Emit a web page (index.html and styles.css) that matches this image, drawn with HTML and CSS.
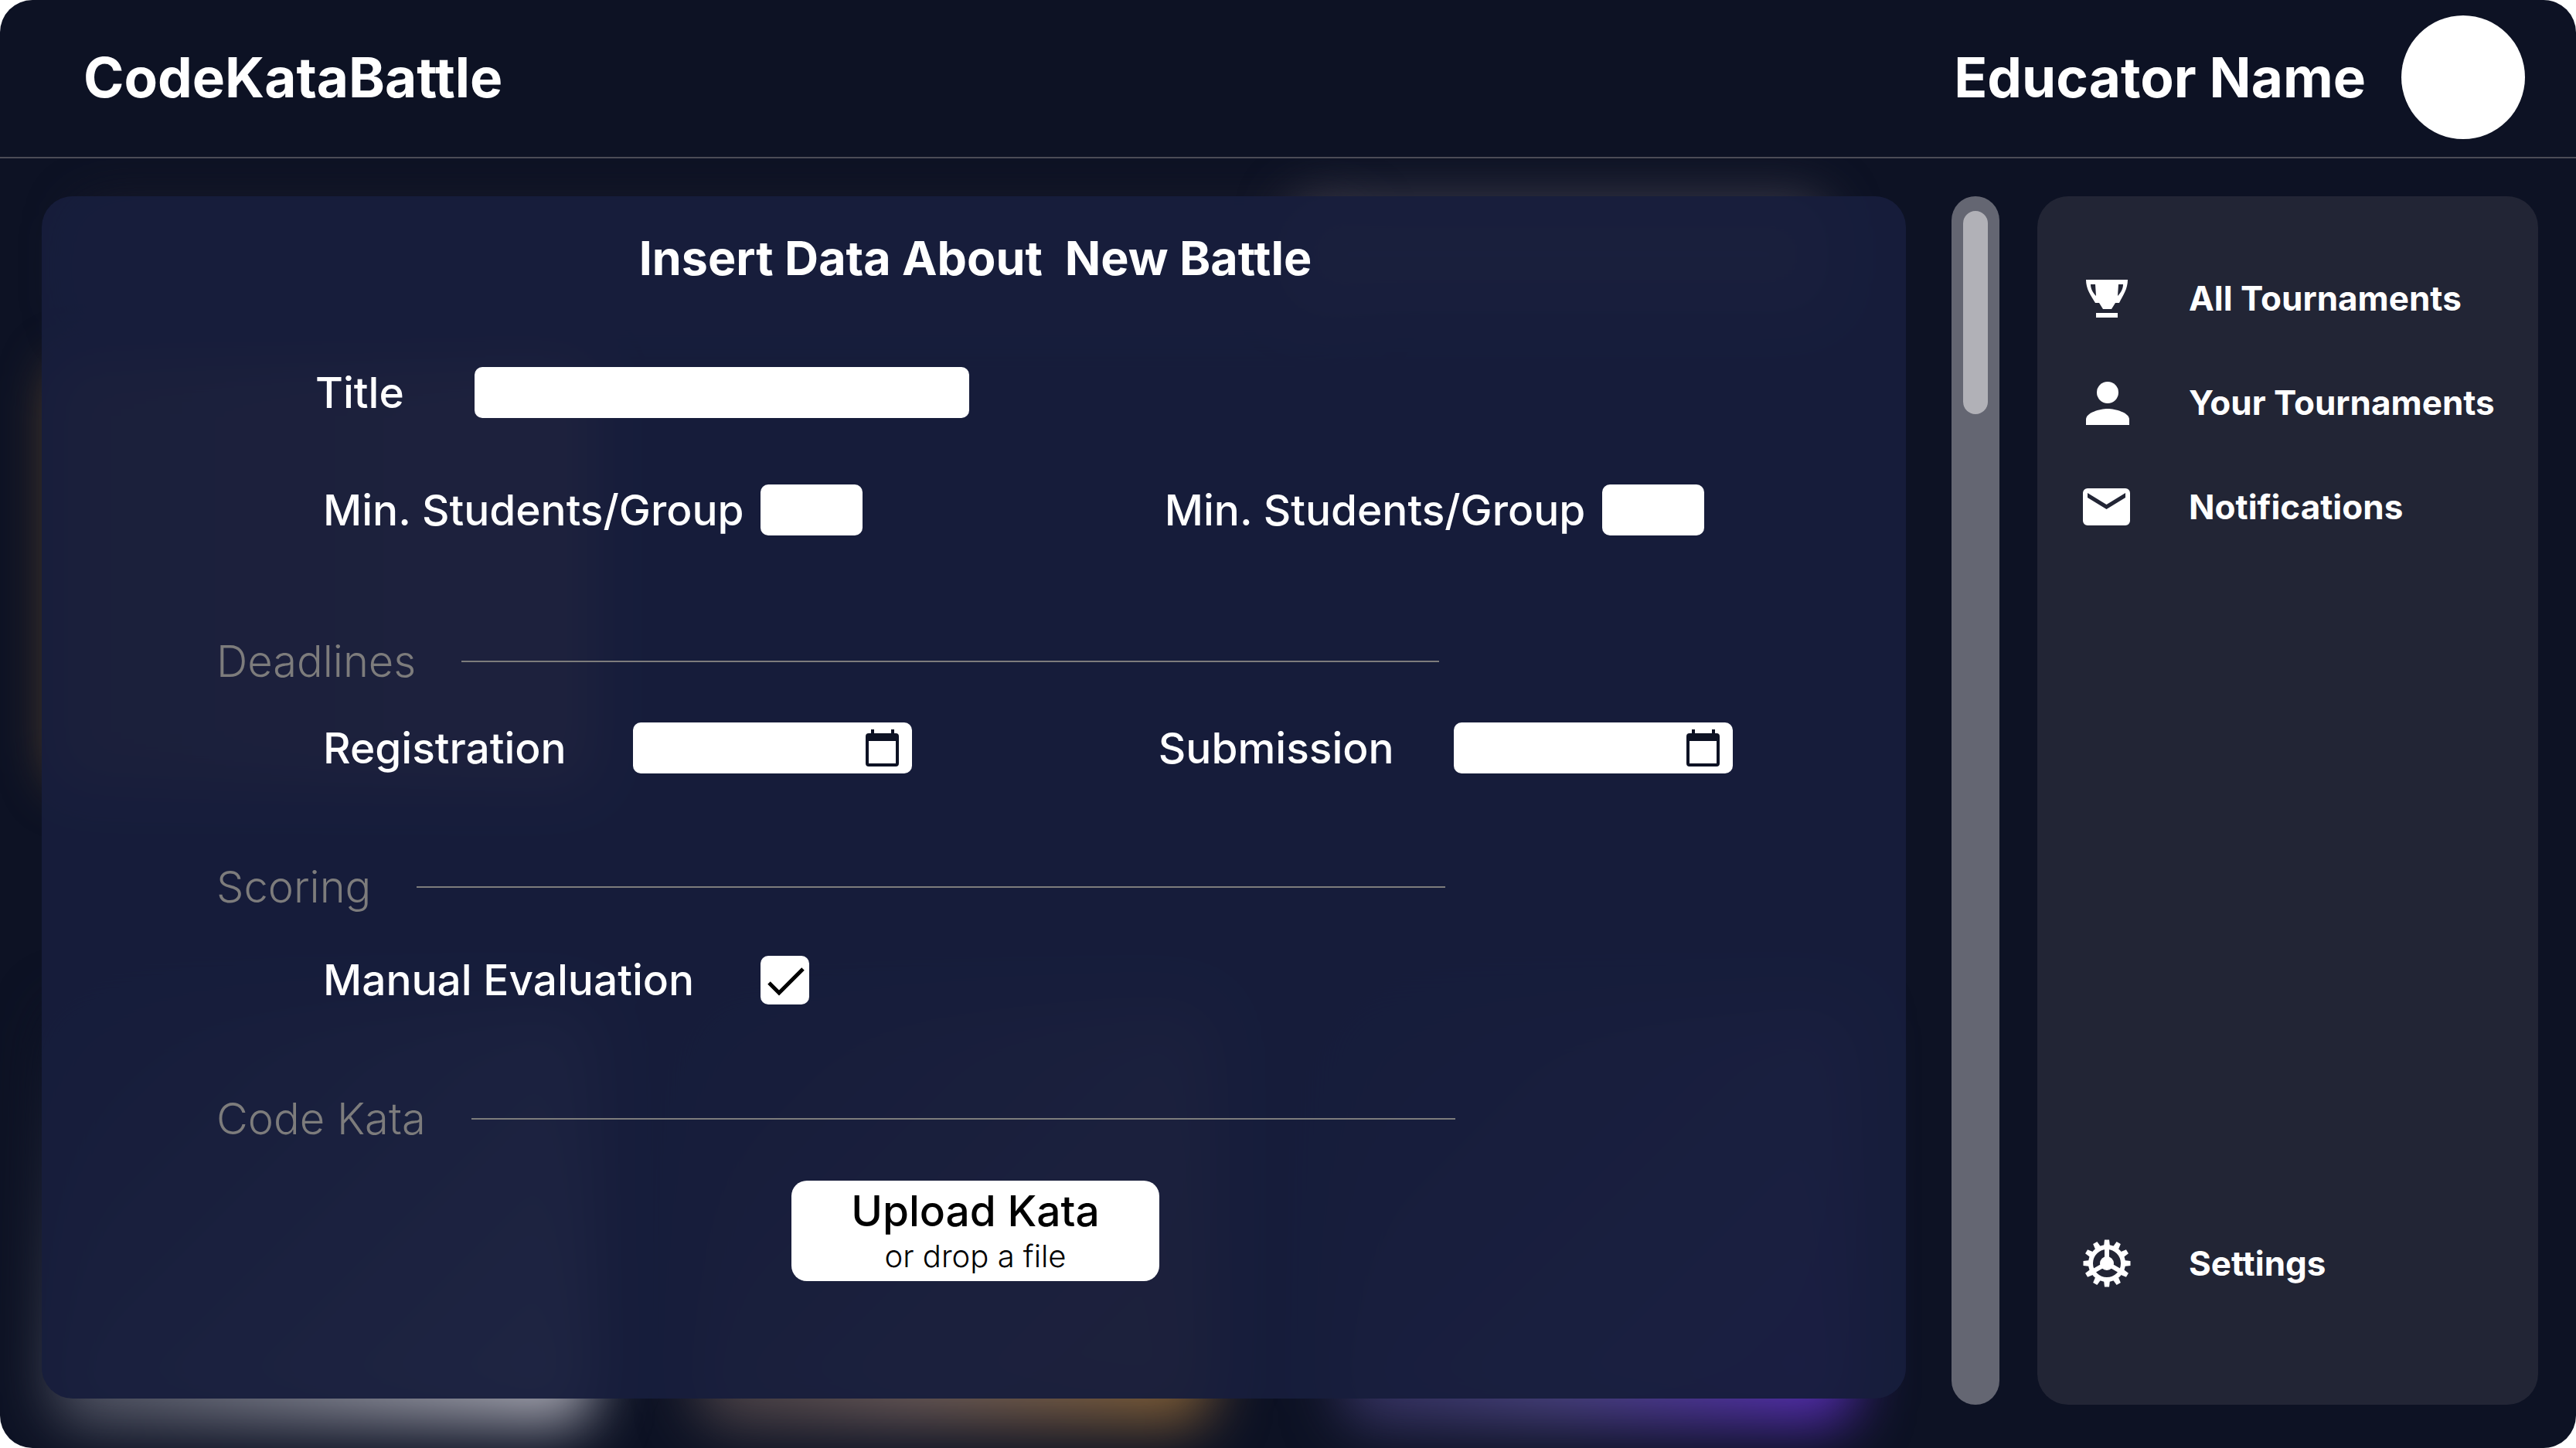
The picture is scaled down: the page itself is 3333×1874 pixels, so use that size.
FILE: index.html
```html
<!DOCTYPE html>
<html lang="en">
<head>
<meta charset="utf-8">
<meta name="viewport" content="width=device-width, initial-scale=1">
<title>CodeKataBattle</title>
<link rel="stylesheet" href="styles.css">
</head>
<body>
<div class="app">
  <div class="glows" aria-hidden="true">
    <div class="glow glow-top-left"></div>
    <div class="glow glow-top-right"></div>
    <div class="glow glow-left"></div>
    <div class="glow glow-silver"></div>
    <div class="glow glow-amber"></div>
    <div class="glow glow-violet"></div>
  </div>

  <header class="topbar">
    <a class="brand" href="#">CodeKataBattle</a>
    <div class="user">
      <span class="user-name">Educator Name</span>
      <span class="avatar"></span>
    </div>
  </header>

  <div class="layout">
    <main class="panel">
      <h1 class="panel-title">Insert Data About  New Battle</h1>
      <form class="form">
        <div class="row row-title">
          <label class="label label-title" for="title">Title</label>
          <input class="input input-title" id="title" type="text">
        </div>
        <div class="row pair row-groups">
          <div class="field">
            <label class="label label-group" for="min-students">Min. Students/Group</label>
            <input class="input input-count" id="min-students" type="text" inputmode="numeric">
          </div>
          <div class="field">
            <label class="label label-group" for="max-students">Min. Students/Group</label>
            <input class="input input-count" id="max-students" type="text" inputmode="numeric">
          </div>
        </div>

        <h2 class="section section-deadlines">Deadlines</h2>
        <div class="row pair">
          <div class="field">
            <label class="label label-registration" for="registration">Registration</label>
            <span class="date">
              <input class="input input-date" id="registration" type="date">
              <svg class="date-icon" viewBox="0 0 44 48"><path fill-rule="evenodd" d="M7 0h4v5h22V0h4v5h2a4 4 0 0 1 4 4v35a4 4 0 0 1-4 4H4a4 4 0 0 1-4-4V9a4 4 0 0 1 4-4h3zM4 15v29h35V15z"/></svg>
            </span>
          </div>
          <div class="field">
            <label class="label label-submission" for="submission">Submission</label>
            <span class="date">
              <input class="input input-date" id="submission" type="date">
              <svg class="date-icon" viewBox="0 0 44 48"><path fill-rule="evenodd" d="M7 0h4v5h22V0h4v5h2a4 4 0 0 1 4 4v35a4 4 0 0 1-4 4H4a4 4 0 0 1-4-4V9a4 4 0 0 1 4-4h3zM4 15v29h35V15z"/></svg>
            </span>
          </div>
        </div>

        <h2 class="section section-scoring">Scoring</h2>
        <div class="row">
          <label class="label label-group" for="manual">Manual Evaluation</label>
          <span class="check">
            <input class="checkbox" id="manual" type="checkbox" checked>
            <svg class="check-icon" viewBox="0 0 63 63"><path d="M11 35l13 13L55 17" fill="none" stroke="#000" stroke-width="5"/></svg>
          </span>
        </div>

        <h2 class="section section-kata">Code Kata</h2>
        <button class="upload" type="button">
          <span class="upload-main">Upload Kata</span>
          <span class="upload-hint">or drop a file</span>
        </button>
      </form>
    </main>

    <div class="track" aria-hidden="true"><div class="thumb"></div></div>

    <nav class="sidebar">
      <a class="item" href="#">
        <svg class="icon" viewBox="0 0 64 64"><path fill-rule="evenodd" d="M5 8h54c0 12-6 20-11 30h-5l-5 8H27l-5-8h-5C11 28 5 20 5 8zM11 14c0 6 3 11 7 15l-1-15zM53 14h-6l-1 15c4-4 7-9 7-15zM18 51h28v6H18z"/></svg>
        All Tournaments
      </a>
      <a class="item" href="#">
        <svg class="icon" viewBox="0 0 64 64"><circle cx="33" cy="19" r="14"/><path d="M5 61v-7c0-9 18-14 28-14s28 5 28 14v7z"/></svg>
        Your Tournaments
      </a>
      <a class="item" href="#">
        <svg class="icon" viewBox="0 0 64 64"><path fill-rule="evenodd" d="M7 8h49a6 6 0 0 1 6 6v36a6 6 0 0 1-6 6H7a6 6 0 0 1-6-6V14a6 6 0 0 1 6-6zM7 14v6l24.500 15L56 20v-6L31.500 29z"/></svg>
        Notifications
      </a>
      <a class="item item-settings" href="#">
        <svg class="icon" viewBox="-32 -32 64 64">
          <g id="teeth"><path id="tooth" d="M-4 -22L-3 -30.500H3L4 -22z"/>
            <use href="#tooth" transform="rotate(30)"/><use href="#tooth" transform="rotate(60)"/><use href="#tooth" transform="rotate(90)"/></g>
          <use href="#teeth" transform="rotate(120)"/><use href="#teeth" transform="rotate(240)"/>
          <circle r="21" fill="none" stroke="#fff" stroke-width="6"/>
          <circle r="9"/>
          <path d="M0 0V-20M0 0L17.300 10M0 0L-17.300 10" stroke="#fff" stroke-width="6"/>
        </svg>
        Settings
      </a>
    </nav>
  </div>
</div>
</body>
</html>
```

FILE: styles.css
```css
* { box-sizing: border-box; }

html { background: #fff; }

body {
  margin: 0;
  color: #fff;
  font-family: Inter, "Open Sans", sans-serif;
}

.app {
  position: relative;
  display: flex;
  flex-direction: column;
  min-height: 100vh;
  overflow: hidden;
  border-radius: 42px;
  background: #0d1224;
}

/* Blurred light behind the panel */
.glows {
  position: absolute;
  inset: 206px 0 0;
  overflow: hidden;
}

.glow {
  position: absolute;
  border-radius: 40px;
  filter: blur(32px);
}

.glow-top-left { left: 3%; top: 60px; width: 50%; height: 160px; background: #1c1c2a; }
.glow-top-right { left: 50%; top: 48px; width: 21%; height: 150px; background: #3c3b4a; }
.glow-left { left: 2%; top: 262px; width: 21%; height: 550px; background: linear-gradient(90deg, #5c452c, #96705c); }
.glow-silver { left: 2%; bottom: 30px; width: 21%; height: 540px; background: linear-gradient(135deg, #0d1224 5%, #b4b4be); filter: blur(36px); }
.glow-amber { left: 27%; bottom: 30px; width: 20%; height: 540px; background: linear-gradient(135deg, #0d1224 5%, #6a5a58 65%, #855e2c); filter: blur(36px); }
.glow-violet { left: 52%; bottom: 30px; width: 20%; height: 540px; background: linear-gradient(135deg, #0d1224 5%, #4a4380 65%, #5a28c0); filter: blur(36px); }

.topbar {
  position: relative;
  display: flex;
  align-items: center;
  justify-content: space-between;
  height: 205px;
  padding: 0 66px 4px 108px;
  border-bottom: 2px solid #4b4b56;
}

.brand,
.user-name {
  color: #fff;
  font-size: 71px;
  font-weight: 700;
  line-height: 80px;
  text-decoration: none;
}

.user {
  display: flex;
  align-items: center;
  gap: 46px;
}

.avatar {
  width: 160px;
  height: 160px;
  border-radius: 50%;
  background: #fff;
}

.layout {
  position: relative;
  display: grid;
  flex: 1;
  grid-template-columns: 1fr 62px 697px;
  padding: 49px 49px 56px 54px;
}

.panel {
  margin: 0 59px 8px 0;
  padding: 40px 222px 150px 226px;
  border-radius: 40px;
  background: rgba(23, 30, 60, 0.95);
}

.panel-title {
  margin: 0 0 101px;
  font-size: 61px;
  font-weight: 700;
  line-height: 80px;
  white-space: pre;
  text-align: center;
}

.row,
.field {
  display: flex;
  align-items: center;
}

.row { height: 66px; padding-left: 138px; }
.row-title { padding-left: 128px; }
.row-groups { margin-top: 86px; }

.pair {
  display: grid;
  grid-template-columns: 1082fr 746fr;
}

.row-groups { grid-template-columns: 1090fr 738fr; }

.label {
  font-size: 55px;
  font-weight: 500;
  line-height: 66px;
  white-space: nowrap;
}

.label-title { width: 206px; }
.label-group { width: 566px; }
.label-registration { width: 401px; }
.label-submission { width: 382px; }

.input {
  height: 66px;
  padding: 0 16px;
  border: 0;
  border-radius: 10px;
  background: #fff;
  color: #0d1224;
  font: 500 40px Inter, sans-serif;
}

.input-title { width: 640px; }
.input-count { width: 132px; }

.date { position: relative; display: flex; }
.input-date { width: 361px; }
.input-date::-webkit-datetime-edit { color: transparent; }
.input-date::-webkit-calendar-picker-indicator { opacity: 0; }

.date-icon {
  position: absolute;
  top: 9px;
  right: 16px;
  width: 44px;
  height: 48px;
  fill: #0d1224;
  pointer-events: none;
}

.section {
  display: flex;
  align-items: center;
  gap: 59px;
  max-width: 100%;
  margin: 108px 0 48px;
  color: #7d7c7c;
  font-size: 56px;
  font-weight: 300;
  line-height: 78px;
  white-space: nowrap;
}

.section::after {
  content: "";
  flex: 1;
  height: 2px;
  background: #7d7c7c;
}

.section-deadlines { width: 1582px; margin: 124px 0 40px; }
.section-scoring { width: 1590px; }
.section-kata { width: 1603px; margin-bottom: 41px; }

.check { position: relative; display: flex; }

.checkbox {
  width: 63px;
  height: 63px;
  margin: 0;
  border-radius: 10px;
  background: #fff;
  appearance: none;
}

.check-icon {
  position: absolute;
  inset: 0;
  visibility: hidden;
  pointer-events: none;
}

.checkbox:checked + .check-icon { visibility: visible; }

.upload {
  display: flex;
  flex-direction: column;
  align-items: center;
  justify-content: center;
  width: 476px;
  height: 130px;
  margin: 0 auto;
  padding: 0;
  border: 0;
  border-radius: 20px;
  background: #fff;
  color: #000;
  font-family: inherit;
}

.upload-main { font-size: 55px; font-weight: 500; line-height: 66px; }
.upload-hint { font-size: 40px; font-weight: 300; line-height: 52px; }

.track {
  padding: 19px 15px;
  border-radius: 31px;
  background: #646672;
}

.thumb {
  height: 263px;
  border-radius: 16px;
  background: #b1b1b7;
}

.sidebar {
  display: flex;
  flex-direction: column;
  gap: 71px;
  margin-left: 49px;
  padding: 100px 40px 151px 58px;
  border-radius: 40px;
  background: #222535;
}

.item {
  display: flex;
  align-items: center;
  gap: 74px;
  color: #fff;
  font-size: 44px;
  font-weight: 700;
  line-height: 64px;
  text-decoration: none;
  white-space: nowrap;
}

.item-settings { margin-top: auto; }

.icon { flex: none; width: 64px; height: 64px; fill: #fff; }
```
